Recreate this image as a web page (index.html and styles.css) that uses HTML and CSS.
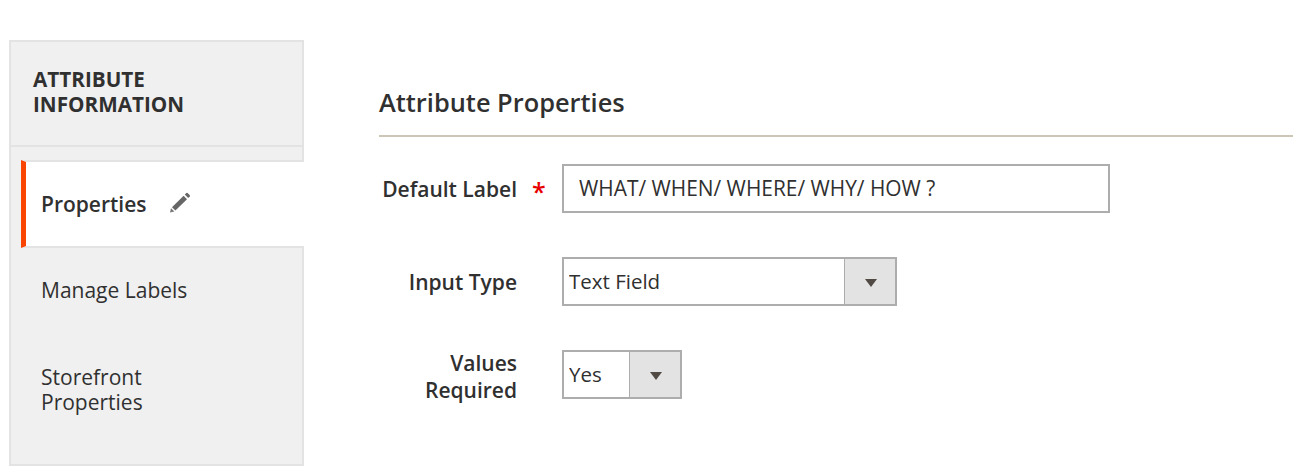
FILE: index.html
```html
<!DOCTYPE html>
<html lang="en">
<head>
  <meta charset="UTF-8" />
  <title>Attribute Properties</title>
  <link rel="stylesheet" href="styles.css">
</head>
<body>

  <div class="page">
    <aside class="sidebar">
      <h3 class="sidebar-title">Attribute Information</h3>
      <ul class="tabs">
        <li class="tab active">
          <span>Properties</span>
          <svg class="pencil" width="22" height="22" viewBox="0 0 22 22">
            <path d="M1 20.5 L2 16.2 L5.4 19.6 Z" fill="#777"/>
            <path d="M3 15.2 L14.6 3.8 L18 7.2 L6.4 18.6 Z" fill="#666"/>
            <path d="M15.8 2.6 L17.4 1 Q18 .6 18.6 1 L20.8 3.2 Q21.2 3.8 20.8 4.4 L19.2 6 Z" fill="#666"/>
          </svg>
        </li>
        <li class="tab">Manage Labels</li>
        <li class="tab tab-last">Storefront<br>Properties</li>
      </ul>
    </aside>

    <main class="content">
      <h2 class="section-title">Attribute Properties</h2>

      <div class="field field-label">
        <label class="field-name required" for="label">Default Label</label>
        <input class="text-input" id="label" type="text" value="WHAT/ WHEN/ WHERE/ WHY/ HOW ?" />
      </div>

      <div class="field field-type">
        <label class="field-name" for="type">Input Type</label>
        <div class="select-wrap select-wide">
          <select id="type"><option>Text Field</option></select>
          <span class="select-arrow"></span>
        </div>
      </div>

      <div class="field field-required">
        <label class="field-name" for="req">Values<br>Required</label>
        <div class="select-wrap select-small">
          <select id="req"><option>Yes</option></select>
          <span class="select-arrow"></span>
        </div>
      </div>
    </main>
  </div>

</body>
</html>
```

FILE: styles.css
```css
* {
  box-sizing: border-box;
}
body {
  margin: 0;
  font-family: 'Open Sans', sans-serif;
  font-size: 21px;
  line-height: 25px;
  color: #303030;
  background: #ffffff;
}
.page {
  display: flex;
  align-items: flex-start;
  padding: 40px 2px 0 9px;
}
.sidebar {
  width: 295px;
  height: 426px;
  flex: none;
  background: #f0f0f0;
  border: 2px solid #e3e3e3;
}
.sidebar-title {
  margin: 0;
  padding: 25px 22px 26px;
  height: 105px;
  border-bottom: 2px solid #e3e3e3;
  font-size: 20.7px;
  line-height: 25px;
  font-weight: 700;
  text-transform: uppercase;
}
.tabs {
  list-style: none;
  margin: 13px -2px 0 10px;
  padding: 0;
}
.tab {
  height: 85px;
  padding: 30px 20px;
}
.tab.active {
  display: flex;
  align-items: center;
  height: 88px;
  padding: 0 0 0 15px;
  background: #ffffff;
  border-top: 2px solid #e3e3e3;
  border-bottom: 2px solid #e3e3e3;
  border-left: 5px solid #fa4502;
  font-weight: 600;
}
.tab-last {
  height: auto;
  padding-top: 32px;
}
.pencil {
  margin-left: 22px;
  margin-top: -2px;
}
.content {
  flex: 1;
  margin-left: 75px;
  padding-top: 45px;
}
.section-title {
  margin: 0;
  height: 52px;
  font-size: 25.4px;
  line-height: 34px;
  font-weight: 600;
  border-bottom: 2px solid #cdc5b5;
}
.field {
  display: flex;
  align-items: flex-start;
}
.field-label {
  margin-top: 27px;
}
.field-type {
  margin-top: 44px;
}
.field-required {
  margin-top: 44px;
}
.field-name {
  position: relative;
  width: 138px;
  flex: none;
  margin-right: 45px;
  padding-top: 13px;
  text-align: right;
  font-weight: 600;
}
.field-required .field-name {
  padding-top: 0;
  line-height: 27px;
}
.required::after {
  content: "*";
  position: absolute;
  left: 153px;
  top: 15px;
  color: #e80000;
  font-size: 25px;
  font-weight: 600;
}
.text-input {
  width: 548px;
  height: 49px;
  padding: 0 15px 2px;
  border: 2px solid #adadad;
  font-family: inherit;
  font-size: 20.9px;
  color: #303030;
  outline: none;
}
.select-wrap {
  position: relative;
  height: 49px;
}
.select-wide {
  width: 335px;
}
.select-small {
  width: 120px;
}
.select-wrap select {
  display: block;
  width: 100%;
  height: 100%;
  padding: 0 0 1px 5px;
  border: 2px solid #adadad;
  border-radius: 0;
  background: #ffffff;
  font-family: inherit;
  font-size: 20.5px;
  color: #303030;
  appearance: none;
  -webkit-appearance: none;
  outline: none;
}
.select-arrow {
  position: absolute;
  top: 2px;
  right: 2px;
  bottom: 2px;
  width: 51px;
  background: #e3e3e3;
  border-left: 1px solid #adadad;
  pointer-events: none;
}
.select-arrow::after {
  content: "";
  position: absolute;
  left: 20px;
  top: 20px;
  border-style: solid;
  border-width: 8px 6px 0;
  border-color: #514943 transparent transparent;
}
```
